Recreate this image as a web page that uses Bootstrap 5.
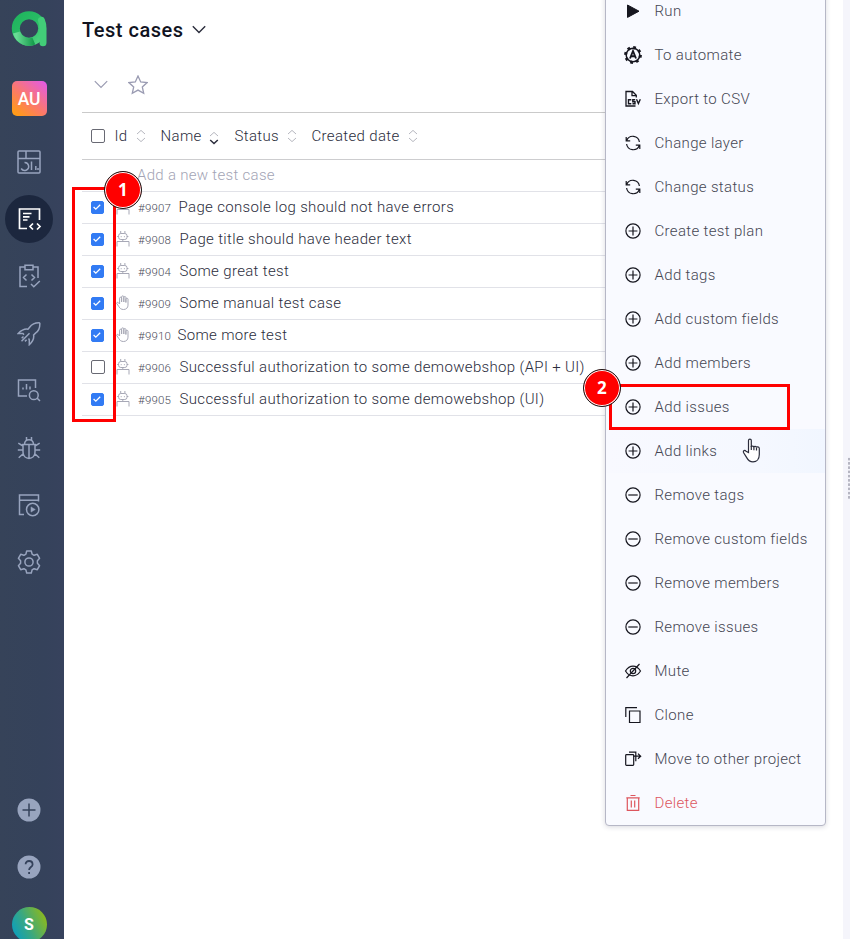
<!DOCTYPE html>
<html lang="en">
<head>
<meta charset="utf-8">
<meta name="viewport" content="width=device-width, initial-scale=1">
<title>Test cases</title>
<link href="https://cdn.jsdelivr.net/npm/bootstrap@5.3.0/dist/css/bootstrap.min.css" rel="stylesheet">
<style>
body{font-family:Roboto,"Liberation Sans",sans-serif;font-weight:300;font-size:15px;line-height:20px;letter-spacing:.34px;color:#2b2d3c;background:#fff;height:939px;overflow:hidden}
svg{display:block;fill:none;stroke:currentColor;flex:none}
.app{height:939px}
.side{width:64px;height:953px;padding-right:6px;background:linear-gradient(90deg,#364359,#35425b 70%,#37425d);color:#98a4be}
.side .logo-box{height:58px}
.side .proj-box{height:75px;padding-top:23px}
.proj{width:35px;height:35px;border-radius:5px;background:linear-gradient(40deg,#ff9b17 8%,#fc7a68 45%,#e45ce0 95%);color:#fff;font:500 17.5px/36px Roboto,sans-serif;text-align:center;letter-spacing:-.2px}
.side-item{height:57.2px;width:58px;flex:none}
.side-item.on{color:#fff}
.side-item.on>span{width:48px;height:48px;background:#1c273e}
.user{width:35px;height:35px;background:linear-gradient(65deg,#13a0b4 15%,#3aa880 45%,#84b727 85%);color:#fff;font:700 16px/36px Roboto,sans-serif}
.page-main{padding-left:18px;margin-right:20px;min-width:0}
.title-row{height:60px;padding-bottom:1px}
.title-row h1{font:500 20px/24px Roboto,sans-serif;letter-spacing:.52px;color:#11141f;margin:0;width:102px;white-space:nowrap}
.tools{height:52px;padding:0 0 3px 12px;color:#9a9bb2}
.tools .star{margin-left:20px}
.thead-row{height:48px;border-top:1px solid #cacaca;border-bottom:1px solid #cdcdcf;padding-left:9px;white-space:nowrap}
.thead-row .th-id{width:16px;margin:0 5px 0 10px}
.thead-row .th-name{width:41px;margin:0 7px 0 15px}
.thead-row .th-name+svg{margin:3px 0 0}
.thead-row .th-status{width:46px;margin:0 6px 0 16px}
.thead-row .th-date{width:90px;margin:0 6px 0 15px}
.line{height:32px;border-bottom:1px solid #e1e2e8;padding:0 0 2px 9px;white-space:nowrap}
.new-line{color:#a3a4b5;padding-left:55px;letter-spacing:.3px}
.box{width:13.500px;height:14px;border:1.600px solid #686973;border-radius:2px;flex:none}
.box.on{background:#327bf4;border-color:#327bf4;color:#fff;width:13px;height:13px}
.box.on svg{margin:1px 0 0 .400px}
.line .box{margin:1px 0 0}
.line .box.on{margin-right:.500px}
.kind{width:33.500px;padding-left:11px;color:#a7a8b6}
.code{font-size:11.500px;letter-spacing:.2px;color:#4b4c5a;padding-top:2px;width:32px;margin-right:9.500px}
.s1{margin-left:-1px}
.s5{margin-left:-2px}
.sort{color:#b6b7bf}
.split{width:7px;background:#f5f5fb}
.grip{width:3px;height:43px;margin-left:4px;margin-top:17px;background-image:radial-gradient(circle,#b6b6c2 1px,transparent 1.300px);background-size:4px 4.250px}
.actions{left:605px;top:-12px;width:221px;height:838px;background:#f9faff;border:1px solid #b6b7c6;border-radius:4px;box-shadow:0 1px 5px rgba(60,60,90,.2);margin:0;color:#454653}
.actions li{height:44px;padding-left:17px;gap:11.500px;white-space:nowrap}
.actions svg{color:#16161f}
.actions .hov{background:linear-gradient(90deg,#f8f9ff,#f5f8ff 70%,#f1f6ff)}
.actions .del,.actions .del svg{color:#dd565e}
.frame{border:3px solid #f00}
.frame-a{left:72px;top:187px;width:44px;height:235px}
.frame-b{left:609px;top:384px;width:181px;height:46px}
.num{width:38px;height:38px;border:1.500px solid #1a1a1a;background:#f00;color:#fff;font:700 17px/36px "Open Sans",sans-serif;text-align:center;box-shadow:inset 0 0 0 1px #fff}
.num-a{left:104px;top:171px}
.num-b{left:583px;top:369px}
.pointer{left:742px;top:438px}
</style>
<script src="https://cdn.jsdelivr.net/npm/bootstrap@5.3.0/dist/js/bootstrap.bundle.min.js"></script>
</head>
<body>
<svg width="0" height="0" class="position-absolute">
<defs>
<symbol id="plus" viewBox="0 0 18 18"><circle cx="9" cy="9" r="7.1"/><path d="M9 4.6v8.8M4.6 9h8.8"/></symbol>
<symbol id="minus" viewBox="0 0 18 18"><circle cx="9" cy="9" r="7.1"/><path d="M4.3 9h9.4"/></symbol>
<symbol id="cycle" viewBox="0 0 18 18"><path d="M2.2 3v3.9h4M2.7 6.5A6.6 6.6 0 0 1 15.4 8M15.8 15v-3.9h-4M15.3 11.5A6.6 6.6 0 0 1 2.6 10"/></symbol>
<symbol id="tick" viewBox="0 0 10 8"><path d="M1.6 4l2.2 2.1L8.2 1.7"/></symbol>
<symbol id="robot" viewBox="0 0 14 18"><rect x="2.6" y="3.5" width="8.4" height="6" rx="2.2"/><path d="M4.7 3.5V1M8.9 3.5V1M1.2 6.5h1.4M11 6.500h1.4M5.2 6.2v1M8.4 6.2v1M6.800 9.500v2M1 16.500v-5h12v5"/></symbol>
<symbol id="hand" viewBox="0 0 14 18"><path d="M3.6 10V4.2c0-1.300 2-1.300 2 0V8 2.900c0-1.400 2.200-1.400 2.200 0V8 3.500c0-1.300 2.100-1.300 2.100 0V8.500 5.200c0-1.300 2.100-1.300 2.100 0v6c0 2.400-1.700 4.300-4.400 4.300-2.600 0-3.600-1.100-4.800-3L.8 9.600c-.5-1.100.9-1.700 1.600-.9z"/></symbol>
<symbol id="sorter" viewBox="0 0 10 14"><path d="M1 5l4-3.600L9 5M1 9l4 3.600L9 9"/></symbol>
</defs>
</svg>
<div class="app d-flex position-relative overflow-hidden">
<nav class="side d-flex flex-column align-items-center flex-shrink-0">
  <div class="logo-box d-flex align-items-center">
    <svg width="36" height="36" viewBox="0 0 36 36"><defs><linearGradient id="ga" x1="0" y1="0" x2="1" y2="1"><stop offset="0" stop-color="#20b45e"/><stop offset=".5" stop-color="#28bd65"/><stop offset="1" stop-color="#52d483"/></linearGradient><linearGradient id="gb" x1="0" y1="0" x2="1" y2="0"><stop offset="0" stop-color="#69dc95"/><stop offset="1" stop-color="#169b4c"/></linearGradient></defs><circle cx="18" cy="17.500" r="13.200" stroke="url(#ga)" stroke-width="8"/><path d="M5.500 21.500c2.500 8 10.700 11.300 17.300 8.500" stroke="url(#gb)" stroke-width="7.500"/><path d="M30.500 9.500c1.400 3 1.500 6 1.500 9V31.800" stroke="#42cd78" stroke-width="7" stroke-linecap="round"/></svg>
  </div>
  <div class="proj-box"><div class="proj">AU</div></div>
  <a class="side-item d-flex align-items-center justify-content-center text-reset"><svg width="24" height="26" viewBox="0 0 24 26" stroke-width="1.500"><rect x="1" y="2" width="22" height="22" rx="1"/><path d="M1 9.500h22M9 2v7.500M7.500 13.500a4 4 0 1 1-3.300 6M14.500 12.500V21M18.800 17v4M21 19v2"/></svg></a>
  <a class="side-item on d-flex align-items-center justify-content-center"><span class="rounded-circle d-flex align-items-center justify-content-center"><svg width="26" height="26" viewBox="0 0 26 26" stroke-width="1.700"><path d="M11 22.500H3.500V3H23.500v11M7 7.500h8.500M7 10.800h6.500M7 14h4.500M17 17.500l-3 3 3 3M21 17.500l3 3-3 3"/></svg></span></a>
  <a class="side-item d-flex align-items-center justify-content-center text-reset"><svg width="24" height="26" viewBox="0 0 24 26" stroke-width="1.500"><path d="M8 4H3v19.500H10M16 4h5V15M8 2.200h8v4.600H8zM9.500 11.500l-3 3 3 3M14.500 11.500l3 3-3 3M14 21l2.800 2.700 6-5.700"/></svg></a>
  <a class="side-item d-flex align-items-center justify-content-center text-reset"><svg width="24" height="26" viewBox="0 0 24 26" stroke-width="1.500"><path d="M22.800 2.700c-4.300-.2-7.500.7-10.200 4.500L11 9.200c-4-.8-6.500 1-9.800 4.300l4.800.1 1 1.100M11.500 18.500l.8 1.200v5c3.200-3 5-5.800 4.300-9.700l1.900-1.800c3.700-2.500 4.600-5.800 4.300-10.500M4.500 21.200l8-8M6.500 16.500l-1.800 1.800M9.600 19.700l-1.700 1.700"/></svg></a>
  <a class="side-item d-flex align-items-center justify-content-center text-reset"><svg width="24" height="26" viewBox="0 0 24 26" stroke-width="1.500"><path d="M10 19H1.500V3H18.500v8M6 12.500v-2M9.500 12.500V7M13 12.500V9.500M20 21l3 3"/><circle cx="16.800" cy="18.200" r="4.400"/></svg></a>
  <a class="side-item d-flex align-items-center justify-content-center text-reset"><svg width="24" height="26" viewBox="0 0 24 26" stroke-width="1.500"><path d="M6 9.500h12v7.500c0 8.500-12 8.500-12 0zM7.500 9.500c0-6.500 9-6.500 9 0M12 9.500v14M9.500 5V2M14.500 5V2M6 11L1.300 8.200M6 15H.8M6.500 18.500l-4.800 4.300M18 11l4.700-2.800M18 15h5.200M17.500 18.500l4.800 4.300"/></svg></a>
  <a class="side-item d-flex align-items-center justify-content-center text-reset"><svg width="24" height="26" viewBox="0 0 24 26" stroke-width="1.500"><path d="M7 22.500H2.500V3h19v6.500M2.500 8.200h19"/><circle cx="15.700" cy="17.500" r="6.200"/><path d="M14 14.900l4.300 2.600-4.300 2.600z" fill="currentColor" stroke-width=".5"/></svg></a>
  <a class="side-item d-flex align-items-center justify-content-center text-reset"><svg width="24" height="26" viewBox="0 0 24 26" stroke-width="1.500" stroke-linejoin="round"><circle cx="12" cy="13" r="4.100"/><path d="M9.700 2h4.600l.8 3.100 2 1.200 3.200-1 2.300 4-2.200 2.400v2.600l2.200 2.400-2.300 4-3.200-1-2 1.200-.8 3.100H9.700l-.8-3.100-2-1.200-3.200 1-2.300-4 2.200-2.400v-2.600L1.400 9.300l2.300-4 3.200 1 2-1.200z"/></svg></a>
  <div class="flex-grow-1"></div>
  <a class="side-item d-flex align-items-center justify-content-center text-reset"><svg width="24" height="24" viewBox="0 0 24 24"><circle cx="12" cy="12" r="11.500" fill="#98a4be" stroke="none"/><path d="M12 5.500v13M5.500 12h13" stroke="#35425b" stroke-width="1.500"/></svg></a>
  <a class="side-item d-flex align-items-center justify-content-center text-reset"><svg width="24" height="24" viewBox="0 0 24 24"><circle cx="12" cy="12" r="11.500" fill="#98a4be" stroke="none"/><path d="M8.600 9.300c0-4.500 7-4.300 7 .1 0 2.600-3.500 2.600-3.500 5.500M12.100 17v2" stroke="#35425b" stroke-width="1.800"/></svg></a>
  <a class="side-item d-flex align-items-center justify-content-center text-reset text-decoration-none"><span class="user rounded-circle text-center">S</span></a>
</nav>
<main class="page-main flex-grow-1">
  <div class="title-row d-flex align-items-center"><h1>Test cases</h1><svg class="ms-2" width="14" height="9" viewBox="0 0 14 9" stroke-width="1.400"><path d="M.8 1.200L7 7.500l6.200-6.300"/></svg></div>
  <div class="tools d-flex align-items-center"><svg width="14" height="9" viewBox="0 0 14 9" stroke-width="1.200"><path d="M.8 1.200L7 7.500l6.200-6.300"/></svg><svg class="star" width="20" height="20" viewBox="0 0 20 20" stroke-width="1.300"><path d="M10 1l2.700 5.900 6.400.7-4.800 4.300 1.400 6.400L10 15.100l-5.700 3.200 1.400-6.400L.9 7.600l6.400-.7z"/></svg></div>
  <div class="thead-row d-flex align-items-center">
    <span class="box"></span>
    <span class="th-id">Id</span><svg class="sort" width="10" height="14"><use href="#sorter"/></svg>
    <span class="th-name">Name</span><svg width="10" height="14" viewBox="0 0 10 14"><path stroke="#b6b7bf" d="M1 5l4-3.600L9 5"/><path stroke-width="1.500" d="M1.200 9L5 12.500 8.800 9"/></svg>
    <span class="th-status">Status</span><svg class="sort" width="10" height="14"><use href="#sorter"/></svg>
    <span class="th-date">Created date</span><svg class="sort" width="10" height="14"><use href="#sorter"/></svg>
  </div>
  <div class="line new-line d-flex align-items-center">Add a new test case</div>
  <div class="line d-flex align-items-center"><span class="box on"><svg width="10" height="8" stroke-width="1.300"><use href="#tick"/></svg></span><span class="kind"><svg width="14" height="18"><use href="#robot"/></svg></span><span class="code">#9907</span><span class="s1">Page console log should not have errors</span></div>
  <div class="line d-flex align-items-center"><span class="box on"><svg width="10" height="8" stroke-width="1.300"><use href="#tick"/></svg></span><span class="kind"><svg width="14" height="18"><use href="#robot"/></svg></span><span class="code">#9908</span><span>Page title should have header text</span></div>
  <div class="line d-flex align-items-center"><span class="box on"><svg width="10" height="8" stroke-width="1.300"><use href="#tick"/></svg></span><span class="kind"><svg width="14" height="18"><use href="#robot"/></svg></span><span class="code">#9904</span><span>Some great test</span></div>
  <div class="line d-flex align-items-center"><span class="box on"><svg width="10" height="8" stroke-width="1.300"><use href="#tick"/></svg></span><span class="kind"><svg width="14" height="18"><use href="#hand"/></svg></span><span class="code">#9909</span><span>Some manual test case</span></div>
  <div class="line d-flex align-items-center"><span class="box on"><svg width="10" height="8" stroke-width="1.300"><use href="#tick"/></svg></span><span class="kind"><svg width="14" height="18"><use href="#hand"/></svg></span><span class="code">#9910</span><span class="s5">Some more test</span></div>
  <div class="line d-flex align-items-center"><span class="box"></span><span class="kind"><svg width="14" height="18"><use href="#robot"/></svg></span><span class="code">#9906</span><span>Successful authorization to some demowebshop (API + UI)</span></div>
  <div class="line d-flex align-items-center"><span class="box on"><svg width="10" height="8" stroke-width="1.300"><use href="#tick"/></svg></span><span class="kind"><svg width="14" height="18"><use href="#robot"/></svg></span><span class="code">#9905</span><span>Successful authorization to some demowebshop (UI)</span></div>
</main>
<aside class="split d-flex flex-column justify-content-center flex-shrink-0"><div class="grip"></div></aside>

<ul class="actions list-unstyled position-absolute">
  <li class="d-flex align-items-center"><svg width="20" height="20" viewBox="0 0 20 20"><path d="M4.500 4v12.400L16 10.200z" fill="currentColor"/></svg><span>Run</span></li>
  <li class="d-flex align-items-center"><svg width="20" height="20" viewBox="0 0 20 20"><circle cx="10" cy="10" r="6.800" stroke-width="1.500"/><circle cx="10" cy="10" r="7.400" stroke-width="3" stroke-dasharray="2.600 3.211"/><path d="M7 13.500L10 6l3 7.500M8 11.300h4" stroke-width="1.900"/></svg><span>To automate</span></li>
  <li class="d-flex align-items-center"><svg width="20" height="20" viewBox="0 0 20 20" stroke-width="1.300"><path d="M12.500 17H3V2.500h6.500l3.800 3.800V8.500M9 2.700v4h4"/><path d="M8.300 10.700H5.500v4h2.800M12.200 10.700H9.800v2h2.200v2H9.500M13.500 10.300l1.900 4.300 1.900-4.300" stroke-width="1.400"/></svg><span>Export to CSV</span></li>
  <li class="d-flex align-items-center"><svg width="20" height="18" stroke-width="1.200"><use href="#cycle"/></svg><span>Change layer</span></li>
  <li class="d-flex align-items-center"><svg width="20" height="18" stroke-width="1.200"><use href="#cycle"/></svg><span>Change status</span></li>
  <li class="d-flex align-items-center"><svg width="20" height="18" stroke-width="1.200"><use href="#plus"/></svg><span>Create test plan</span></li>
  <li class="d-flex align-items-center"><svg width="20" height="18" stroke-width="1.200"><use href="#plus"/></svg><span>Add tags</span></li>
  <li class="d-flex align-items-center"><svg width="20" height="18" stroke-width="1.200"><use href="#plus"/></svg><span>Add custom fields</span></li>
  <li class="d-flex align-items-center"><svg width="20" height="18" stroke-width="1.200"><use href="#plus"/></svg><span>Add members</span></li>
  <li class="d-flex align-items-center"><svg width="20" height="18" stroke-width="1.200"><use href="#plus"/></svg><span>Add issues</span></li>
  <li class="d-flex align-items-center hov"><svg width="20" height="18" stroke-width="1.200"><use href="#plus"/></svg><span>Add links</span></li>
  <li class="d-flex align-items-center"><svg width="20" height="18" stroke-width="1.200"><use href="#minus"/></svg><span>Remove tags</span></li>
  <li class="d-flex align-items-center"><svg width="20" height="18" stroke-width="1.200"><use href="#minus"/></svg><span>Remove custom fields</span></li>
  <li class="d-flex align-items-center"><svg width="20" height="18" stroke-width="1.200"><use href="#minus"/></svg><span>Remove members</span></li>
  <li class="d-flex align-items-center"><svg width="20" height="18" stroke-width="1.200"><use href="#minus"/></svg><span>Remove issues</span></li>
  <li class="d-flex align-items-center"><svg width="20" height="20" viewBox="0 0 20 20" stroke-width="1.200"><path d="M2.500 10c4-6.500 11-6.500 15 0-4 6.500-11 6.500-15 0zM3.500 17L16.500 3"/><circle cx="10" cy="10" r="2.700"/></svg><span>Mute</span></li>
  <li class="d-flex align-items-center"><svg width="20" height="20" viewBox="0 0 20 20" stroke-width="1.200"><path d="M6.500 6H17v11.500H6.500zM2.800 12V2.700H14"/></svg><span>Clone</span></li>
  <li class="d-flex align-items-center"><svg width="20" height="20" viewBox="0 0 20 20" stroke-width="1.200"><rect x="2.700" y="5.600" width="8" height="10.700" rx=".8"/><path d="M6 3.200h6.800v9M10.500 7.200h7M15 4.600l2.700 2.600L15 9.800"/></svg><span>Move to other project</span></li>
  <li class="d-flex align-items-center del"><svg width="20" height="20" viewBox="0 0 20 20" stroke-width="1.200"><path d="M4.300 5v12.300h11.400V5M3.300 4.800h13.400M7.500 2.500h5M8.300 7.500v7M11.700 7.500v7"/></svg><span>Delete</span></li>
</ul>

<div class="frame frame-a position-absolute"></div>
<div class="frame frame-b position-absolute"></div>
<div class="num num-a rounded-circle position-absolute">1</div>
<div class="num num-b rounded-circle position-absolute">2</div>
<svg class="pointer position-absolute" width="20" height="26" viewBox="0 0 20 26" stroke="#15151c" stroke-width="1.200"><path fill="#fff" d="M6.500 14.500V2.600c0-2 2.800-2 2.800 0V9c0-1.300 2.600-1.300 2.600.2 0-1.300 2.600-1.100 2.600.5 0-1.300 2.800-1.100 2.800.8v6c0 4.600-2.600 7.400-6.300 7.400-3.500 0-4.800-1.500-6.300-4.300L1.500 14.500c-.7-1.800 1.300-2.700 2.500-1.300z"/><path d="M9.300 8v4M11.900 9v3.300M14.500 10v2.500"/></svg>
</div>
</body>
</html>
